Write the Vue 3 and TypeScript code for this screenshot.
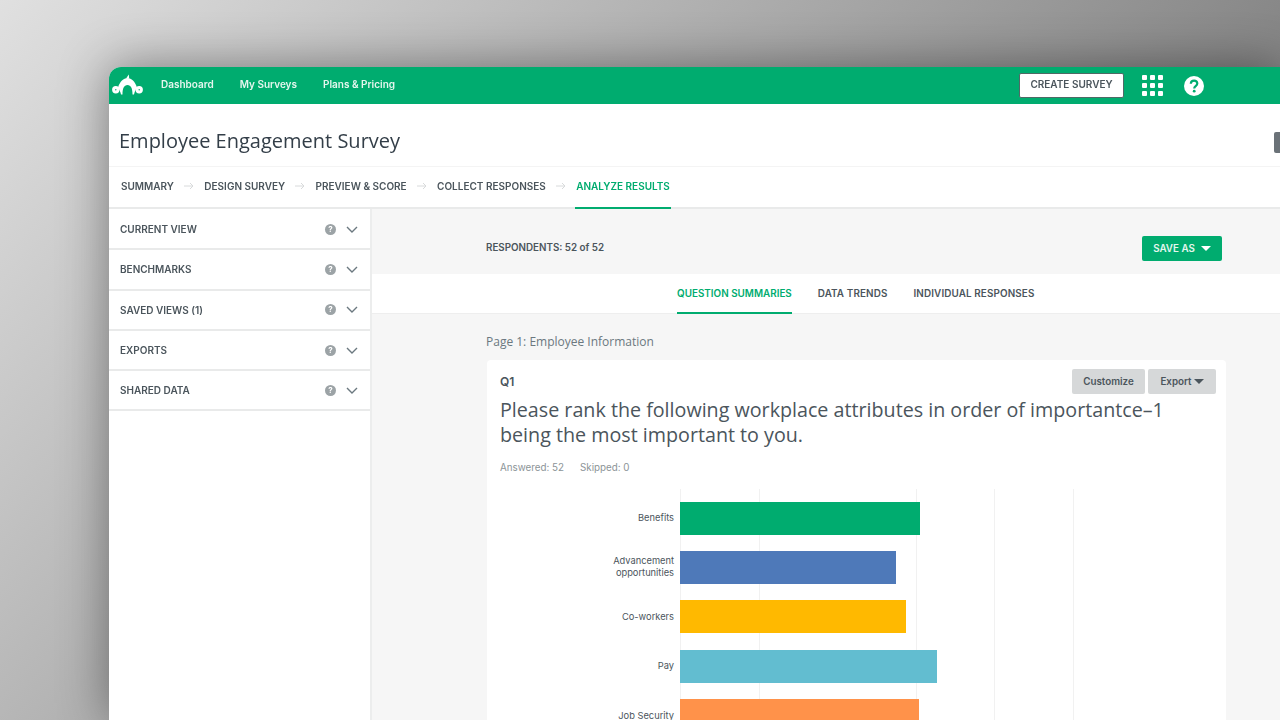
<script setup lang="ts">
const navItems: string[] = ['Dashboard', 'My Surveys', 'Plans & Pricing']
const steps: string[] = ['SUMMARY', 'DESIGN SURVEY', 'PREVIEW & SCORE', 'COLLECT RESPONSES']
const panels: string[] = ['CURRENT VIEW', 'BENCHMARKS', 'SAVED VIEWS (1)', 'EXPORTS', 'SHARED DATA']
const tabs: string[] = ['QUESTION SUMMARIES', 'DATA TRENDS', 'INDIVIDUAL RESPONSES']
interface Bar { label: string[]; width: number; color: string }
const bars: Bar[] = [
  { label: ['Benefits'], width: 240, color: '#00ac6f' },
  { label: ['Advancement', 'opportunities'], width: 216, color: '#4e79b9' },
  { label: ['Co-workers'], width: 226, color: '#ffb900' },
  { label: ['Pay'], width: 257, color: '#62bdd0' },
  { label: ['Job Security'], width: 239, color: '#ff924a' },
]
const grid: number[] = [0, 78.5, 235.5, 314, 393]
</script>

<template>
  <div class="stage">
    <div class="window">
      <header class="topbar">
        <svg class="logo" viewBox="0 0 31 22" aria-label="SurveyMonkey">
          <path d="M14 4.500 16.800 0.600 17.200 4.500Z" fill="#fff" />
          <path d="M9 20.500C8.500 18 7.500 16 6 13.500 8 7.500 11.500 4 15.500 4 19.500 4 23 7.500 25 13.500 23.500 16 22.500 18 22 20.500H20.500C20.500 14.500 19 11 15.500 11 12 11 10.500 14.500 10.500 20.500Z" fill="#fff" />
          <circle cx="3.800" cy="15.700" r="2.200" fill="none" stroke="#fff" stroke-width="3" />
          <circle cx="27.200" cy="15.700" r="2.200" fill="none" stroke="#fff" stroke-width="3" />
        </svg>
        <nav class="nav">
          <a v-for="item in navItems" :key="item" class="nav-link">{{ item }}</a>
        </nav>
        <div class="top-actions">
          <button class="create">CREATE SURVEY</button>
          <div class="apps">
            <i v-for="n in 9" :key="n"></i>
          </div>
          <svg class="help" viewBox="0 0 20 20">
            <circle cx="10" cy="10" r="10" fill="#fff" />
            <path d="M6.800 7.700C6.900 5.700 8.300 4.600 10.100 4.600c1.900 0 3.200 1.100 3.200 2.800 0 2.600-3.100 2.700-3.100 5" fill="none" stroke="#00ac6f" stroke-width="2.200" />
            <circle cx="10.200" cy="15.200" r="1.400" fill="#00ac6f" />
          </svg>
        </div>
      </header>

      <div class="title-row">
        <h1>Employee Engagement Survey</h1>
        <span class="title-btn"></span>
      </div>

      <div class="steps">
        <template v-for="step in steps" :key="step">
          <span class="step">{{ step }}</span>
          <svg class="arrow" viewBox="0 0 10 8">
            <path d="M0 4h9M6 1l3 3-3 3" fill="none" stroke="#d8dadb" stroke-width="1" />
          </svg>
        </template>
        <span class="step active">ANALYZE RESULTS</span>
      </div>

      <div class="body">
        <aside class="sidebar">
          <div v-for="panel in panels" :key="panel" class="panel">
            <span class="panel-name">{{ panel }}</span>
            <span class="q-dot">?</span>
            <svg class="chev" viewBox="0 0 12 7">
              <path d="M1 1l5 5 5-5" fill="none" stroke="#6b787f" stroke-width="1.400" />
            </svg>
          </div>
        </aside>

        <main class="main">
          <div class="resp-row">
            <span class="resp">RESPONDENTS: 52 of 52</span>
            <button class="save">SAVE AS<i class="caret"></i></button>
          </div>
          <div class="tabs">
            <span v-for="(tab, i) in tabs" :key="tab" class="tab" :class="{ on: i === 0 }">{{ tab }}</span>
          </div>
          <div class="content">
            <div class="page-name">Page 1: Employee Information</div>
            <section class="card">
              <div class="card-head">
                <span class="qnum">Q1</span>
                <div class="card-btns">
                  <button class="gbtn">Customize</button>
                  <button class="gbtn export">Export<i class="caret dark"></i></button>
                </div>
              </div>
              <p class="question">Please rank the following workplace attributes in order of importantce–1 being the most important to you.</p>
              <div class="stats"><span>Answered: 52</span><span>Skipped: 0</span></div>
              <div class="chart">
                <span v-for="g in grid" :key="g" class="gridline" :style="{ left: g + 'px' }"></span>
                <div v-for="bar in bars" :key="bar.width" class="bar-row">
                  <div class="bar-label"><span v-for="l in bar.label" :key="l">{{ l }}</span></div>
                  <div class="bar" :style="{ width: bar.width + 'px', background: bar.color }"></div>
                </div>
              </div>
            </section>
          </div>
        </main>
      </div>
    </div>
  </div>
</template>

<style>
html, body { margin: 0; height: 100%; overflow: hidden; }
</style>

<style scoped>
.stage {
  position: relative;
  width: 1280px;
  height: 720px;
  overflow: hidden;
  background: linear-gradient(130deg, #e0e0e0 0%, #5f5f5f 100%);
  font-family: "Inter", "Liberation Sans", sans-serif;
  color: #333e48;
}
.window {
  position: absolute;
  left: 109px;
  top: 67px;
  width: 1171px;
  height: 653px;
  background: #fff;
  border-radius: 12px 0 0 0;
  box-shadow: 0 0 50px rgba(0, 0, 0, 0.42);
  overflow: hidden;
  display: flex;
  flex-direction: column;
  filter: blur(0.35px);
}
.topbar {
  height: 37px;
  flex: none;
  background: #00ac6f;
  display: flex;
  align-items: center;
}
.logo { width: 31px; height: 22px; margin-left: 3px; flex: none; margin-top: -1px; }
.nav { display: flex; gap: 26px; margin-left: 18px; margin-top: -3px; }
.nav-link { color: #e4f6ee; font-size: 10px; font-weight: 600; }
.top-actions { margin-left: auto; display: flex; align-items: center; margin-right: 76px; }
.create {
  box-sizing: border-box;
  width: 105px;
  height: 25px;
  background: #fff;
  border: 1px solid #4f6a66;
  border-radius: 2px;
  font: 600 10px "Inter", sans-serif;
  color: #4b555c;
  padding: 0 0 2px;
  margin-top: -1px;
}
.apps {
  display: grid;
  grid-template-columns: repeat(3, 5px);
  grid-auto-rows: 5px;
  gap: 3px 3px;
  margin-left: 18px;
}
.apps i { background: #fff; border-radius: 1px; }
.help { width: 20px; height: 20px; margin-left: 21px; }
.title-row {
  height: 63px;
  flex: none;
  display: flex;
  align-items: center;
  justify-content: space-between;
  border-bottom: 1px solid #f4f4f4;
  box-sizing: border-box;
  padding-left: 10px;
}
h1 { margin: 10px 0 0; font-family: "Open Sans", sans-serif; font-size: 20px; font-weight: 400; color: #333e48; }
.title-btn { width: 6px; height: 21px; background: #6b7278; border-radius: 2px 0 0 2px; margin-top: 14px; }
.steps {
  height: 42px;
  flex: none;
  box-sizing: border-box;
  border-bottom: 2px solid #e9eaea;
  display: flex;
  align-items: center;
  padding: 0 0 2px 12px;
}
.step { font-size: 10px; font-weight: 600; color: #4b555c; white-space: nowrap; }
.step.active {
  color: #00ac6f;
  align-self: stretch;
  display: flex;
  align-items: center;
  padding: 0 1px 2px;
  margin: 0 0 -4px -1px;
  border-bottom: 2px solid #00ac6f;
}
.arrow { width: 10px; height: 8px; margin: 0 10.200px; flex: none; }
.body { flex: 1; display: flex; min-height: 0; }
.sidebar {
  width: 263px;
  flex: none;
  box-sizing: border-box;
  border-right: 2px solid #eceded;
  padding-top: 1px;
}
.panel {
  height: 40.300px;
  box-sizing: border-box;
  border-bottom: 2px solid #e9eaea;
  display: flex;
  align-items: center;
  padding: 0 12px 0 11px;
}
.panel-name { flex: 1; font-size: 10px; font-weight: 600; color: #4b555c; }
.q-dot {
  width: 11px;
  height: 11px;
  border-radius: 50%;
  background: #9ca3a6;
  color: #fff;
  font-size: 8px;
  font-weight: 700;
  line-height: 11px;
  text-align: center;
}
.chev { width: 12px; height: 7px; margin-left: 10px; }
.main { flex: 1; background: #f6f6f6; min-width: 0; }
.resp-row {
  height: 65px;
  box-sizing: border-box;
  display: flex;
  align-items: center;
  justify-content: space-between;
  padding: 13px 58px 0 114px;
}
.resp { font-size: 9.800px; font-weight: 600; color: #4b555c; margin-top: -2px; }
.save {
  width: 80px;
  height: 25px;
  background: #00ac6f;
  border: 0;
  border-radius: 2px;
  color: #e4f6ee;
  font: 600 9.800px "Inter", sans-serif;
  padding: 0;
}
.caret {
  display: inline-block;
  width: 0;
  height: 0;
  border-left: 5px solid transparent;
  border-right: 5px solid transparent;
  border-top: 5px solid #fff;
  margin-left: 6px;
  vertical-align: 1px;
}
.caret.dark { border-top-color: #4b555c; margin-left: 2px; }
.tabs {
  height: 40px;
  box-sizing: border-box;
  background: #fff;
  border-bottom: 1px solid #eeeeee;
  display: flex;
  justify-content: flex-start;
  gap: 26px;
  padding-left: 305px;
}
.tab {
  font-size: 9.900px;
  font-weight: 600;
  color: #4b555c;
  display: flex;
  align-items: center;
  margin-bottom: -1px;
  padding-bottom: 3px;
  white-space: nowrap;
  letter-spacing: 0.120px;
}
.tab.on { color: #00ac6f; border-bottom: 2px solid #00ac6f; letter-spacing: 0; padding-bottom: 1px; }
.content { padding: 19px 54px 0 115px; }
.page-name { font-family: "Open Sans", sans-serif; font-size: 12px; color: #6b787f; height: 27px; line-height: 18px; margin-left: -1px; }
.card { background: #fff; border-radius: 4px; height: 400px; }
.card-head {
  display: flex;
  justify-content: space-between;
  align-items: flex-start;
  padding: 9px 10px 0 13px;
}
.qnum { font-size: 12px; font-weight: 600; color: #4b555c; margin-top: 5px; }
.card-btns { display: flex; gap: 3px; }
.gbtn {
  height: 25px;
  width: 73px;
  padding: 0;
  background: #d6d8d9;
  border: 0;
  border-radius: 2px;
  color: #4b555c;
  font: 600 9.800px "Inter", sans-serif;
}
.gbtn.export { width: 68px; }
.question {
  margin: 3px 0 0;
  padding: 0 13px;
  width: 700px;
  font-family: "Open Sans", sans-serif;
  font-size: 19.700px;
  line-height: 25px;
  color: #4b555c;
}
.stats {
  display: flex;
  gap: 16px;
  margin: 15px 0 0 13px;
  font-size: 9.800px;
  color: #8c9497;
}
.chart { position: relative; margin: 16px 0 0 193px; padding-top: 12.500px; height: 300px; }
.gridline { position: absolute; top: 0; bottom: 0; width: 1px; background: #f1f1f1; }
.bar-row { display: flex; align-items: center; height: 33px; margin-bottom: 16.400px; position: relative; }
.bar-label {
  position: absolute;
  right: 100%;
  width: 110px;
  margin-right: 6px;
  display: flex;
  flex-direction: column;
  align-items: flex-end;
  font-size: 9.300px;
  line-height: 12px;
  color: #4b555c;
}
.bar { height: 33px; }
</style>
